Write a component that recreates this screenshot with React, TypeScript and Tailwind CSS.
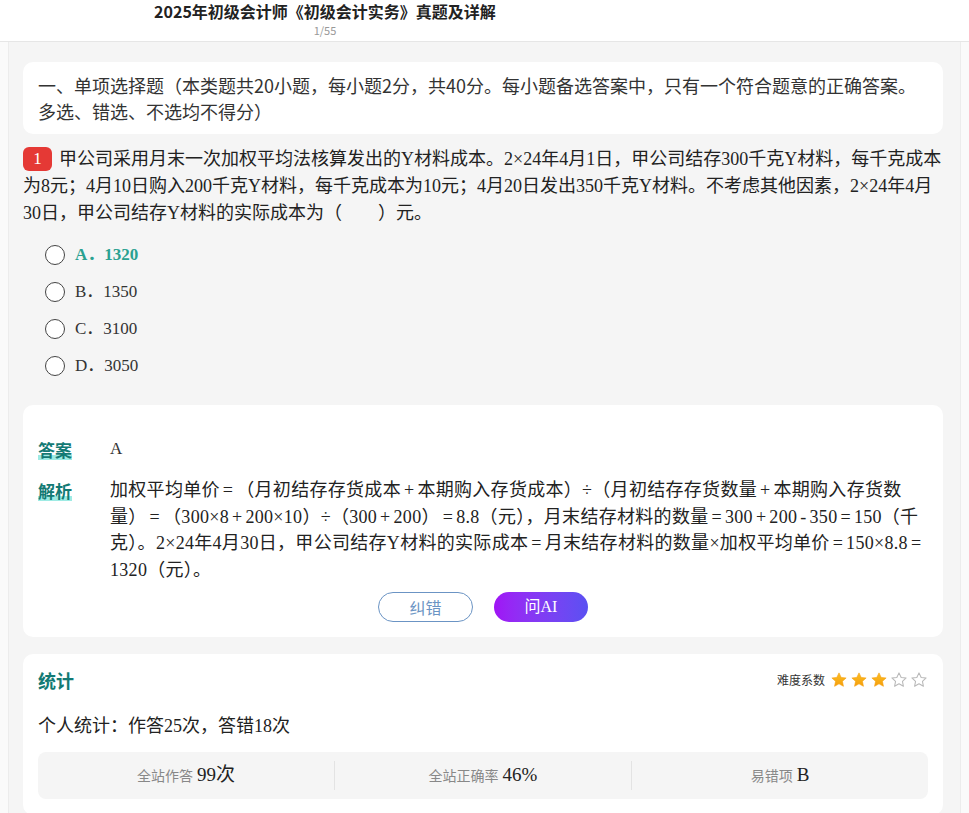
import React from "react";

const serif = '"Liberation Serif", "Noto Sans CJK SC", serif';
const sans = '"Noto Sans CJK SC", "Liberation Sans", sans-serif';

const options = [
  { key: "A", text: "1320", correct: true },
  { key: "B", text: "1350" },
  { key: "C", text: "3100" },
  { key: "D", text: "3050" },
];

const analysis =
  "加权平均单价=（月初结存存货成本+本期购入存货成本）÷（月初结存存货数量+本期购入存货数量）=（300×8+200×10）÷（300+200）=8.8（元），月末结存材料的数量=300+200-350=150（千克）。2×24年4月30日，甲公司结存Y材料的实际成本=月末结存材料的数量×加权平均单价=150×8.8=1320（元）。";

// formula operators get a little air on both sides, and a line may break after them
function Formula({ text }: { text: string }) {
  return (
    <>
      {text.split(/([=+-])/).map((part, i) =>
        /^[=+-]$/.test(part) ? (
          <React.Fragment key={i}>
            <span className="mx-[3px]">{part}</span>
            <wbr />
          </React.Fragment>
        ) : (
          <React.Fragment key={i}>{part}</React.Fragment>
        )
      )}
    </>
  );
}

function Star({ filled }: { filled: boolean }) {
  return (
    <svg width="18" height="18" viewBox="0 0 24 24">
      <defs>
        <linearGradient id="starFill" x1="0" y1="0" x2="0" y2="1">
          <stop offset="0%" stopColor="#fbbf24" />
          <stop offset="100%" stopColor="#f59e0b" />
        </linearGradient>
      </defs>
      <polygon
        points="12,2.5 14.9,8.6 21.5,9.3 16.6,13.8 17.9,20.4 12,17.1 6.1,20.4 7.4,13.8 2.5,9.3 9.1,8.6"
        fill={filled ? "url(#starFill)" : "none"}
        stroke={filled ? "#f59e0b" : "#b8b8b8"}
        strokeWidth={filled ? 0.8 : 1.4}
        strokeLinejoin="round"
      />
    </svg>
  );
}

function Label({ children }: { children: React.ReactNode }) {
  return (
    <span className="relative inline-block text-[17px] font-bold leading-[22px] text-[#137a74]">
      <span className="absolute bottom-[1px] left-0 right-0 h-[5px] bg-[#9eebe4]" />
      <span className="relative">{children}</span>
    </span>
  );
}

export default function App() {
  return (
    <div className="min-h-screen bg-[#fafafa] text-[#333]" style={{ fontFamily: sans }}>
      <div className="h-[42px] border-b border-[#e6e6e6] bg-white">
        <div className="flex w-[650px] flex-col items-center pt-[1px]">
          <div className="text-[16px] font-bold leading-[20px] text-[#222]">
            2025年初级会计师《初级会计实务》真题及详解
          </div>
          <div className="mt-[2px] text-[11px] leading-[14px] text-[#999]">1/55</div>
        </div>
      </div>

      <div className="mx-[8px] border-x border-[#ececec] bg-[#f5f5f5] pl-[14px] pr-[17px] pt-[20px] pb-[20px]">
        <div className="rounded-[10px] bg-white px-[15px] py-[10px] text-[18px] leading-[26px] text-[#333]">
          一、单项选择题（本类题共20小题，每小题2分，共40分。每小题备选答案中，只有一个符合题意的正确答案。多选、错选、不选均不得分）
        </div>

        <div className="mt-[12px] text-[18px] leading-[27px] text-[#222]" style={{ fontFamily: serif }}>
          <span className="mr-[7px] inline-flex h-[24px] w-[29px] items-center justify-center rounded-[6px] bg-[#e53935] align-[1px] text-[17px] leading-[24px] text-white">
            1
          </span>
          甲公司采用月末一次加权平均法核算发出的Y材料成本。2×24年4月1日，甲公司结存300千克Y材料，每千克成本为8元；4月10日购入200千克Y材料，每千克成本为10元；4月20日发出350千克Y材料。不考虑其他因素，2×24年4月30日，甲公司结存Y材料的实际成本为（　　）元。
        </div>

        <div className="mt-[18px] flex flex-col gap-[17px] pl-[22px]">
          {options.map((o) => (
            <div key={o.key} className="flex h-[20px] items-center gap-[10px]">
              <span className="h-[20px] w-[20px] rounded-full border-[1.5px] border-[#444] bg-white" />
              <span
                className={
                  o.correct
                    ? "text-[17px] font-bold text-[#2aa191]"
                    : "text-[17px] text-[#333]"
                }
                style={{ fontFamily: serif }}
              >
                {o.key}．{o.text}
              </span>
            </div>
          ))}
        </div>

        <div className="mt-[29px] rounded-[10px] bg-white px-[15px] pt-[33px] pb-[15px]">
          <div className="flex items-start">
            <div className="w-[72px] shrink-0">
              <Label>答案</Label>
            </div>
            <div className="text-[17px] leading-[22px]" style={{ fontFamily: serif }}>
              A
            </div>
          </div>
          <div className="mt-[15px] flex items-start">
            <div className="w-[72px] shrink-0 pt-[2px]">
              <Label>解析</Label>
            </div>
            <div
              className="text-[18px] leading-[26.7px] tracking-[0.3px] text-[#222]"
              style={{ fontFamily: serif }}
            >
              <Formula text={analysis} />
            </div>
          </div>
          <div className="mt-[8px] flex justify-center gap-[21px]">
            <button className="h-[30px] w-[95px] rounded-full border border-[#6b94c4] bg-white text-[16px] text-[#6b94c4]">
              纠错
            </button>
            <button
              className="h-[30px] w-[94px] rounded-full bg-gradient-to-r from-[#a012f5] to-[#5a50f2] text-[16px] text-white"
              style={{ fontFamily: serif }}
            >
              问AI
            </button>
          </div>
        </div>

        <div className="mt-[17px] rounded-[10px] bg-white px-[15px] pt-[15px] pb-[16px]">
          <div className="flex items-center justify-between">
            <span className="text-[18px] font-bold leading-[22px] text-[#137a74]">统计</span>
            <div className="flex items-center gap-[4px]">
              <span className="mr-[1px] text-[12px] text-[#333]">难度系数</span>
              <div className="flex items-center gap-[2px]">
                <Star filled />
                <Star filled />
                <Star filled />
                <Star filled={false} />
                <Star filled={false} />
              </div>
            </div>
          </div>
          <div className="mt-[22px] text-[18px] leading-[26px] text-[#222]" style={{ fontFamily: serif }}>
            个人统计：作答25次，答错18次
          </div>
          <div className="mt-[13px] flex h-[47px] items-center rounded-[8px] bg-[#f5f5f5]">
            <div className="flex flex-1 items-center justify-center gap-[4px] border-r border-[#e3e3e3]">
              <span className="text-[14px] text-[#888]">全站作答</span>
              <span className="text-[19px] text-[#222]" style={{ fontFamily: serif }}>99次</span>
            </div>
            <div className="flex flex-1 items-center justify-center gap-[4px] border-r border-[#e3e3e3]">
              <span className="text-[14px] text-[#888]">全站正确率</span>
              <span className="text-[19px] text-[#222]" style={{ fontFamily: serif }}>46%</span>
            </div>
            <div className="flex flex-1 items-center justify-center gap-[4px]">
              <span className="text-[14px] text-[#888]">易错项</span>
              <span className="text-[19px] text-[#222]" style={{ fontFamily: serif }}>B</span>
            </div>
          </div>
        </div>
      </div>
    </div>
  );
}
